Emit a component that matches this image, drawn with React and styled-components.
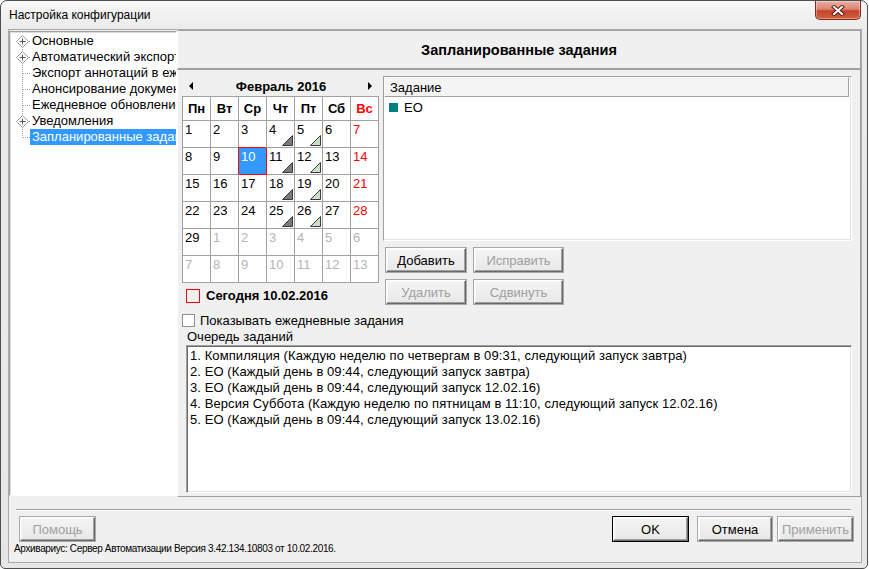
import styled, { createGlobalStyle, css } from "styled-components";

const GlobalStyle = createGlobalStyle`
  html, body {
    margin: 0;
    padding: 0;
    background: #ffffff;
  }
  body {
    font-family: "Liberation Sans", Arial, sans-serif;
    font-size: 13px;
    color: #000;
  }
  * {
    box-sizing: border-box;
  }
`;

const treeItems = [
  { label: "Основные", expandable: true },
  { label: "Автоматический экспорт", expandable: true },
  { label: "Экспорт аннотаций в ежедневник" },
  { label: "Анонсирование документов" },
  { label: "Ежедневное обновление данных" },
  { label: "Уведомления", expandable: true },
  { label: "Запланированные задания", selected: true },
];

const dayNames = ["Пн", "Вт", "Ср", "Чт", "Пт", "Сб", "Вс"];

const queue = [
  "1. Компиляция (Каждую неделю по четвергам в 09:31, следующий запуск завтра)",
  "2. ЕО (Каждый день в 09:44, следующий запуск завтра)",
  "3. ЕО (Каждый день в 09:44, следующий запуск 12.02.16)",
  "4. Версия Суббота (Каждую неделю по пятницам в 11:10, следующий запуск 12.02.16)",
  "5. ЕО (Каждый день в 09:44, следующий запуск 13.02.16)",
];

const buildDays = () => {
  const days = [];
  for (let i = 0; i < 42; i++) {
    const n = i + 1;
    const col = i % 7;
    const current = n <= 29;
    days.push({
      num: current ? n : n - 29,
      current,
      sunday: col === 6,
      selected: current && n === 10,
      mark: current && col === 3 ? "dark" : current && col === 4 ? "light" : null,
    });
  }
  return days;
};

const TreeLines = ({ first, last, expandable }) => (
  <svg width="20" height="16" viewBox="0 0 20 16">
    <line x1="12.5" y1={first ? 8 : 0} x2="12.5" y2={last ? 8.5 : 16} stroke="#a0a0a0" strokeDasharray="1 1" />
    <line x1="13" y1="8.5" x2="20" y2="8.5" stroke="#a0a0a0" strokeDasharray="1 1" />
    {expandable && (
      <g>
        <polygon points="12.5,2.5 18.5,8.5 12.5,14.5 6.5,8.5" fill="#fff" stroke="#9a9a9a" />
        <line x1="9.5" y1="8.5" x2="15.5" y2="8.5" stroke="#555" />
        <line x1="12.5" y1="5.5" x2="12.5" y2="11.5" stroke="#555" />
      </g>
    )}
  </svg>
);

const Corner = ({ kind }) => (
  <Mark width="11" height="11" viewBox="0 0 11 11">
    <polygon
      points="10.5,0.5 10.5,10.5 0.5,10.5"
      fill={kind === "dark" ? "#7a7a7a" : "#c9dfc9"}
      stroke="#3a3a3a"
      strokeWidth="1"
    />
  </Mark>
);

const App = () => {
  const days = buildDays();

  return (
    <>
      <GlobalStyle />
      <Window>
        <TitleBar>
          <Caption>Настройка конфигурации</Caption>
          <CloseButton>
            <svg width="14" height="11" viewBox="0 0 14 11">
              <path d="M3 2 L11 9 M11 2 L3 9" stroke="#5a1d14" strokeWidth="4" strokeLinecap="square" />
              <path d="M3 2 L11 9 M11 2 L3 9" stroke="#ffffff" strokeWidth="2" strokeLinecap="square" />
            </svg>
          </CloseButton>
        </TitleBar>
        <Client>
          <Body>
            <Tree>
              {treeItems.map((item, i) => (
                <TreeRow key={item.label}>
                  <TreeLines first={i === 0} last={i === treeItems.length - 1} expandable={item.expandable} />
                  <TreeLabel $selected={item.selected}>{item.label}</TreeLabel>
                </TreeRow>
              ))}
            </Tree>
            <Panel>
              <PanelHeader>Запланированные задания</PanelHeader>
              <PanelContent>
                <Columns>
                  <CalendarColumn>
                    <MonthRow>
                      <svg width="5" height="8" viewBox="0 0 5 8">
                        <polygon points="4,0 4,8 0,4" fill="#000" />
                      </svg>
                      <MonthTitle>Февраль 2016</MonthTitle>
                      <svg width="5" height="8" viewBox="0 0 5 8">
                        <polygon points="0,0 0,8 4,4" fill="#000" />
                      </svg>
                    </MonthRow>
                    <DayGrid>
                      {dayNames.map((d, i) => (
                        <DayHead key={d} $red={i === 6}>
                          {d}
                        </DayHead>
                      ))}
                      {days.map((d, i) => (
                        <DayCell
                          key={i}
                          $other={!d.current}
                          $red={d.current && d.sunday}
                          $selected={d.selected}
                        >
                          {d.num}
                          {d.mark && <Corner kind={d.mark} />}
                        </DayCell>
                      ))}
                    </DayGrid>
                    <TodayRow>
                      <TodayBox />
                      Сегодня 10.02.2016
                    </TodayRow>
                  </CalendarColumn>
                  <TaskColumn>
                    <TaskList>
                      <ListHeader>Задание</ListHeader>
                      <TaskItem>
                        <Swatch />
                        ЕО
                      </TaskItem>
                    </TaskList>
                    <ButtonGrid>
                      <Button $w={80}>Добавить</Button>
                      <Button $w={89} disabled>
                        Исправить
                      </Button>
                      <Button $w={80} disabled>
                        Удалить
                      </Button>
                      <Button $w={89} disabled>
                        Сдвинуть
                      </Button>
                    </ButtonGrid>
                  </TaskColumn>
                </Columns>
                <CheckRow>
                  <CheckBox />
                  Показывать ежедневные задания
                </CheckRow>
                <QueueLabel>Очередь заданий</QueueLabel>
                <QueueList>
                  {queue.map((q) => (
                    <QueueLine key={q}>{q}</QueueLine>
                  ))}
                </QueueList>
              </PanelContent>
            </Panel>
          </Body>
          <Separator />
          <ButtonRow>
            <Button $w={75} disabled>
              Помощь
            </Button>
            <Spacer />
            <Button $w={75} $primary>
              OK
            </Button>
            <Button $w={74} $gap={10}>
              Отмена
            </Button>
            <Button $w={75} $gap={6} disabled>
              Применить
            </Button>
          </ButtonRow>
          <Footer>Архивариус: Сервер Автоматизации Версия 3.42.134.10803 от 10.02.2016.</Footer>
        </Client>
      </Window>
    </>
  );
};

export default App;

const Window = styled.div`
  width: 868px;
  height: 569px;
  border: 1px solid #4e4e4e;
  border-radius: 7px 7px 5px 5px;
  background: linear-gradient(#f8f8f8, #ebebeb 28px, #e6e6e6);
  padding: 0 5px 5px 7px;
  display: flex;
  flex-direction: column;
  overflow: hidden;
`;

const TitleBar = styled.div`
  height: 28px;
  display: flex;
  justify-content: space-between;
  align-items: flex-start;
  flex-shrink: 0;
`;

const Caption = styled.div`
  font-size: 12px;
  line-height: 14px;
  margin: 7px 0 0 1px;
  color: #000;
`;

const CloseButton = styled.div`
  width: 46px;
  height: 19px;
  margin-right: 1px;
  border: 1px solid #7d2a1e;
  border-top: none;
  border-radius: 0 0 5px 5px;
  background: linear-gradient(#eab0a4 0%, #dc8572 45%, #c4442c 55%, #d2603f 100%);
  box-shadow: inset 0 0 0 1px rgba(255, 255, 255, 0.35);
  display: flex;
  align-items: center;
  justify-content: center;
`;

const Client = styled.div`
  flex: 1;
  background: #f0f0f0;
  border: 1px solid #a9a9a9;
  display: flex;
  flex-direction: column;
`;

const Body = styled.div`
  height: 467px;
  display: flex;
  flex-shrink: 0;
`;

const Tree = styled.div`
  width: 168px;
  margin: 1px 0;
  background: #fff;
  border: 1px solid;
  border-color: #a0a0a0 #fff #fff #a0a0a0;
  box-shadow: inset 1px 1px 0 #dcdcdc;
  padding-top: 1px;
  overflow: hidden;
`;

const TreeRow = styled.div`
  display: flex;
  align-items: center;
  height: 16px;
  white-space: nowrap;

  svg {
    flex-shrink: 0;
  }
`;

const TreeLabel = styled.span`
  line-height: 16px;
  padding: 0 2px;
  ${(p) =>
    p.$selected &&
    css`
      background: #3399ff;
      color: #fff;
      padding-right: 40px;
    `}
`;

const Panel = styled.div`
  flex: 1;
  display: flex;
  flex-direction: column;
`;

const PanelHeader = styled.div`
  height: 40px;
  flex-shrink: 0;
  border-style: solid;
  border-width: 1px 1px 2px 1px;
  border-color: #a0a0a0 #a0a0a0 #a0a0a0 #ffffff;
  display: flex;
  align-items: center;
  justify-content: center;
  font-weight: bold;
  font-size: 14.5px;
`;

const PanelContent = styled.div`
  flex: 1;
  border-style: solid;
  border-width: 0 1px 1px 1px;
  border-color: #a0a0a0 #a0a0a0 #a0a0a0 #ffffff;
  padding: 6px 8px 3px 4px;
  display: flex;
  flex-direction: column;
`;

const Columns = styled.div`
  display: flex;
  gap: 4px;
`;

const CalendarColumn = styled.div`
  width: 197px;
  display: flex;
  flex-direction: column;
`;

const MonthRow = styled.div`
  height: 20px;
  display: flex;
  align-items: center;
  justify-content: space-between;
  padding: 0 6px 0 7px;
`;

const MonthTitle = styled.span`
  font-weight: bold;
  font-size: 13px;
`;

const DayGrid = styled.div`
  display: grid;
  grid-template-columns: repeat(7, 28px);
  grid-template-rows: 24px repeat(6, 27px);
  border-top: 1px solid #a0a0a0;
  border-left: 1px solid #a0a0a0;
  background: #fff;
`;

const DayHead = styled.div`
  border-right: 1px solid #a0a0a0;
  border-bottom: 1px solid #a0a0a0;
  display: flex;
  align-items: center;
  justify-content: center;
  font-weight: bold;
  color: ${(p) => (p.$red ? "#ff0000" : "#000")};
`;

const DayCell = styled.div`
  position: relative;
  border-right: 1px solid #a0a0a0;
  border-bottom: 1px solid #a0a0a0;
  padding: 2px 0 0 2px;
  line-height: 14px;
  color: ${(p) => (p.$other ? "#b4b4b4" : p.$red ? "#ff0000" : "#000")};
  ${(p) =>
    p.$selected &&
    css`
      background: #3399ff;
      color: #fff;
      border-color: #ff0000;
      box-shadow: -1px -1px 0 0 #ff0000;
    `}
`;

const Mark = styled.svg`
  position: absolute;
  right: 1px;
  bottom: 1px;
`;

const TodayRow = styled.div`
  margin-top: 3px;
  height: 19px;
  display: flex;
  align-items: center;
  gap: 6px;
  padding-left: 4px;
  font-weight: bold;
`;

const TodayBox = styled.span`
  width: 14px;
  height: 14px;
  border: 1px solid #ff0000;
`;

const TaskColumn = styled.div`
  flex: 1;
  display: flex;
  flex-direction: column;
`;

const TaskList = styled.div`
  height: 165px;
  background: #fff;
  border: 1px solid;
  border-color: #a0a0a0 #ffffff #ffffff #a0a0a0;
  box-shadow: inset -1px -1px 0 #e3e3e3;
`;

const ListHeader = styled.div`
  height: 20px;
  border-style: solid;
  border-width: 1px;
  border-color: #ffffff #a0a0a0 #a0a0a0 #ffffff;
  background: #f4f4f4;
  margin-right: 2px;
  padding-left: 5px;
  display: flex;
  align-items: center;
`;

const TaskItem = styled.div`
  margin-top: 2px;
  height: 16px;
  display: flex;
  align-items: center;
  gap: 6px;
  padding-left: 5px;
`;

const Swatch = styled.span`
  width: 9px;
  height: 9px;
  background: #008080;
`;

const ButtonGrid = styled.div`
  margin-top: 7px;
  padding-left: 3px;
  display: grid;
  grid-template-columns: 80px 89px;
  column-gap: 8px;
  row-gap: 8px;
`;

const Button = styled.button`
  font-family: inherit;
  font-size: 13px;
  width: ${(p) => p.$w}px;
  height: 24px;
  padding: 0;
  margin-left: ${(p) => p.$gap || 0}px;
  background: linear-gradient(#f4f4f4, #e8e8e8);
  color: #000;
  border: 1px solid;
  border-color: #ffffff #696969 #696969 #ffffff;
  box-shadow: inset -1px -1px 0 #a0a0a0, inset 1px 1px 0 #f8f8f8;
  outline: 1px solid #a8a8a8;
  outline-offset: 0;

  &:disabled {
    color: #a0a0a0;
  }

  ${(p) =>
    p.$primary &&
    css`
      outline: 1px solid #000;
    `}
`;

const CheckRow = styled.div`
  margin-top: 7px;
  height: 17px;
  display: flex;
  align-items: center;
  gap: 5px;
`;

const CheckBox = styled.span`
  width: 13px;
  height: 13px;
  background: #fff;
  border: 1px solid #8e8f8f;
`;

const QueueLabel = styled.div`
  height: 16px;
  line-height: 16px;
  padding-left: 5px;
`;

const QueueList = styled.div`
  flex: 1;
  margin-left: 4px;
  background: #fff;
  border: 1px solid;
  border-color: #a0a0a0 #ffffff #ffffff #a0a0a0;
  box-shadow: inset 1px 1px 0 #696969, inset -1px -1px 0 #e3e3e3;
  padding: 2px 3px;
`;

const QueueLine = styled.div`
  line-height: 16px;
  white-space: nowrap;
  letter-spacing: 0.08px;
`;

const Separator = styled.div`
  margin: 12px 10px 0 7px;
  border-top: 1px solid #a0a0a0;
  border-bottom: 1px solid #ffffff;
`;

const ButtonRow = styled.div`
  margin-top: 6px;
  padding: 0 8px 0 11px;
  display: flex;
  align-items: center;
`;

const Spacer = styled.div`
  flex: 1;
`;

const Footer = styled.div`
  margin-top: 2px;
  padding-left: 5px;
  font-size: 10px;
  line-height: 12px;
  letter-spacing: -0.35px;
`;
